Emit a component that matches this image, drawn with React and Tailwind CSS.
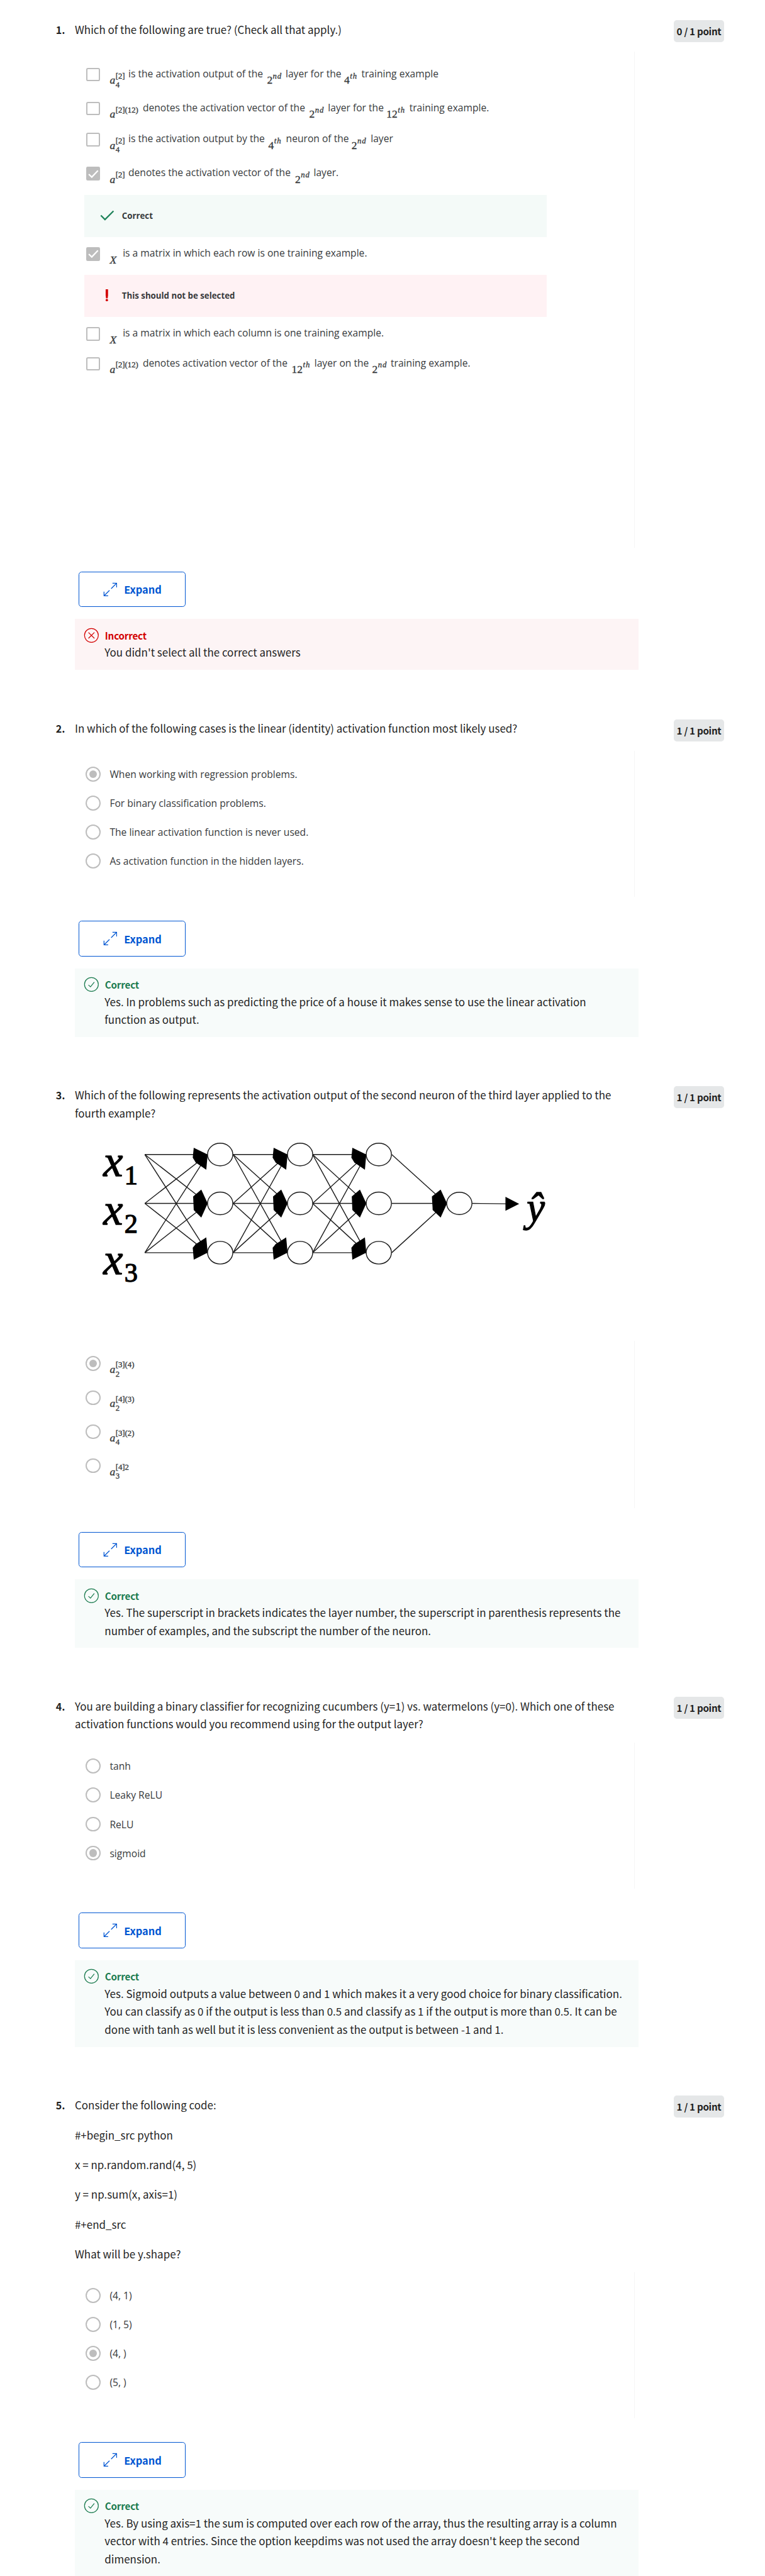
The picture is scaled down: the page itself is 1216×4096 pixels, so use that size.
import React from "react";

const SANS = "font-['Noto_Sans_CJK_SC','Noto_Sans',sans-serif]";
const UI = "font-['Open_Sans','Noto_Sans',sans-serif]";

/* A math term: base letter or number with a superscript and an optional subscript. */
function Term({ base, sup, sub, w, italicBase = true, italicSup = false }) {
  return (
    <span
      className="mt-[10px] flex shrink-0 items-start font-['Liberation_Serif',serif] [-webkit-text-stroke:0.35px_#373a3c]"
      style={{ width: w }}
    >
      <span className={`text-[18.5px] leading-[22px] ${italicBase ? "italic" : ""}`}>{base}</span>
      <span className="ml-[0.5px] mt-[-3px] flex flex-col items-start text-[13.5px] leading-[14px]">
        <span className={italicSup ? "italic tracking-[0.9px]" : ""}>{sup}</span>
        {sub && <span className="mt-px">{sub}</span>}
      </span>
    </span>
  );
}

const aSup = (sup, w, sub) => ({ base: "a", sup, sub, w });
const ord = (n, s, w) => ({ base: n, sup: s, w, italicBase: false, italicSup: true });

/* Segments of a statement: a string with its width, or a math term. */
function Statement({ parts }) {
  return (
    <span className={`flex items-start whitespace-nowrap leading-[22px] text-[#373a3c] ${UI}`}>
      {parts.map((p, i) =>
        p.text ? (
          <span key={i} className="-mt-px shrink-0 text-[16.5px]" style={{ width: p.w }}>{p.text}</span>
        ) : (
          <Term key={i} {...p} />
        )
      )}
    </span>
  );
}

function Checkbox({ checked }) {
  return checked ? (
    <span className="flex h-[22.5px] w-[22.5px] shrink-0 items-center justify-center rounded-[2.5px] bg-[#bdbdbd]">
      <svg viewBox="0 0 22 22" className="h-[22px] w-[22px]" fill="none" stroke="#fff" strokeWidth="2.4">
        <path d="M3.3 11.6 8.3 16.4 18.7 5.6" />
      </svg>
    </span>
  ) : (
    <span className="h-[22.5px] w-[22.5px] shrink-0 rounded-[3px] border-[2.5px] border-[#bdbdbd] bg-white" />
  );
}

function CheckRow({ checked, parts, h }) {
  return (
    <div className="flex items-start pl-[19.5px]" style={{ height: h }}>
      <Checkbox checked={checked} />
      <span className="ml-[16.5px]"><Statement parts={parts} /></span>
    </div>
  );
}

function Note({ good, children }) {
  return (
    <div className={`ml-4 flex h-[70px] w-[775px] items-center ${good ? "bg-[#f4faf8]" : "bg-[#fff2f4]"}`}>
      <span className="ml-[26px] flex w-[24px] justify-center">
        {good ? (
          <svg viewBox="0 0 24 20" className="mt-[-3px] h-5 w-6" fill="none" stroke="#1d8259" strokeWidth="2.4">
            <path d="M1.4 10 8.3 17 22.6 2.6" />
          </svg>
        ) : (
          <svg viewBox="0 0 6 22" className="mt-[-3px] h-[22px] w-1.5" fill="#d30001">
            <path d="M1 1h4v10l-.6 5H1.6L1 11z" />
            <circle cx="3" cy="19.2" r="2" />
          </svg>
        )}
      </span>
      <span className={`ml-[13px] mt-px text-[14px] font-bold text-[#373a3c] ${UI}`}>{children}</span>
    </div>
  );
}

function Radio({ checked }) {
  return (
    <span className="flex h-[25px] w-[25px] shrink-0 items-center justify-center rounded-full border-[2.5px] border-[#bdbdbd] bg-white">
      {checked && <span className="h-[13px] w-[13px] rounded-full bg-[#bdbdbd]" />}
    </span>
  );
}

function RadioRow({ checked, children, pitch = "h-[48.7px]" }) {
  return (
    <div className={`flex items-start pl-[18.5px] ${pitch}`}>
      <Radio checked={checked} />
      <span className={`ml-[15px] whitespace-nowrap text-[16.5px] leading-[26px] text-[#373a3c] ${UI}`}>{children}</span>
    </div>
  );
}

function RadioList({ options, selected }) {
  return options.map((o, i) => <RadioRow key={o} checked={i === selected}>{o}</RadioRow>);
}

function Badge({ children }) {
  return (
    <span className={`flex h-[37px] w-[85px] shrink-0 items-center justify-center whitespace-nowrap rounded-[5px] bg-[#e5e7e8] text-[16px] font-bold tracking-[-0.3px] text-[#1f1f1f] ${SANS}`}>
      {children}
    </span>
  );
}

function ExpandButton() {
  return (
    <button className={`ml-[6px] mt-[40px] flex h-[60px] w-[180px] items-center rounded-[5px] border border-[#0056d2] pl-[40px] text-[17.3px] font-bold text-[#0056d2] ${SANS}`}>
      <svg viewBox="0 0 24 24" className="h-6 w-6" fill="none" stroke="#0056d2" strokeWidth="1.3">
        <path d="M13.4 10.6 22.4 1.6M15.6 1.4H22.6V8.4M10.6 13.4 1.6 22.4M1.4 15.6V22.6H8.4" />
      </svg>
      <span className="ml-[11.5px] mt-px leading-none">Expand</span>
    </button>
  );
}

function Feedback({ good, lines, h }) {
  const color = good ? "#1d7c50" : "#d30001";
  return (
    <div className={`mt-5 w-[945px] ${good ? "bg-[#f7fbfa]" : "bg-[#fdf4f5]"} ${SANS} ${h}`}>
      <div className="flex h-[41px] items-end pb-px pl-[15px]">
        <svg viewBox="0 0 26 26" className="h-[26px] w-[26px]" fill="none" stroke={color} strokeWidth="1.3">
          <circle cx="13" cy="13" r="11.6" />
          <path d={good ? "M8 13.8 11.4 17 17.8 9" : "M8 8 18 18M18 8 8 18"} />
        </svg>
        <span className="ml-[9.5px] text-[16px] font-bold leading-[26px] tracking-[-0.2px]" style={{ color }}>
          {good ? "Correct" : "Incorrect"}
        </span>
      </div>
      <div className="pl-[50px] text-[17.9px] leading-[30px] text-[#1f1f1f]">
        {lines.map((l) => <p key={l} className="whitespace-nowrap">{l}</p>)}
      </div>
    </div>
  );
}

function Question({ number, title, points, figure, titleGap = "", head, body, height, feedback, children }) {
  return (
    <section className={height}>
      <div className={`flex items-start ${head}`}>
        <span className={`w-[32px] pt-px text-[17px] font-bold leading-[30px] text-[#1f1f1f] ${SANS}`}>{number}.</span>
        <div className={`w-[1004px] pt-px text-[17.9px] leading-[30px] text-[#1f1f1f] ${SANS} ${titleGap}`}>
          {title.map((t) => <p key={t} className="whitespace-nowrap">{t}</p>)}
          {figure}
        </div>
        <Badge>{points}</Badge>
      </div>
      <div className="pl-[32px]">
        <div className={`w-[939px] border-r border-[#f5f5f5] ${body}`}>{children}</div>
        <ExpandButton />
        <Feedback {...feedback} />
      </div>
    </section>
  );
}

/* Feed-forward network: three inputs, three hidden layers of three neurons, one output. */
function Network() {
  const rows = [167, 413, 661];
  const gaps = [[276, 592], [720, 994], [1120, 1390]];
  const lines = gaps.flatMap(([x1, x2]) => rows.flatMap((a) => rows.map((b) => [x1, a, x2, b])));
  return (
    <svg viewBox="0 0 2430 870" className="-mt-px ml-[25px] block h-[290px] w-[810px]" fill="none" stroke="#1a1a1a" strokeWidth="4.5">
      {lines.map((l) => <line key={l.join()} x1={l[0]} y1={l[1]} x2={l[2]} y2={l[3]} />)}
      {rows.map((y) => <line key={y} x1="1518" y1={y} x2="1790" y2="413" />)}
      <line x1="1922" y1="413" x2="2100" y2="415" />
      <g fill="#000" stroke="none">
        {[592, 994, 1390].map((x) => (
          <g key={x}>
            <path d={`M${x - 70} 133 ${x} 167 ${x - 7} 244 ${x - 60} 207 ${x - 75} 183z`} />
            <path d={`M${x - 32} 343 ${x} 413 ${x - 32} 484 ${x - 70} 446 ${x - 73} 378z`} />
            <path d={`M${x - 7} 584 ${x} 661 ${x - 70} 696 ${x - 75} 636 ${x - 60} 618z`} />
          </g>
        ))}
        <path d="M1764 343 1796 413 1764 484 1724 446 1720 378z" />
        <path d="M2090 380 2159 415 2090 450z" />
      </g>
      <g fill="#fff">
        {[655, 1057, 1453].map((x) =>
          rows.map((y) => <ellipse key={`${x}-${y}`} cx={x} cy={y} rx="63.5" ry="57" />)
        )}
        <ellipse cx="1858" cy="413" rx="63.5" ry="56" />
      </g>
      <g fill="#000" stroke="#000" strokeWidth="4" className="font-['Liberation_Serif',serif]">
        {[275, 520, 768].map((y, i) => (
          <React.Fragment key={y}>
            <text x="67" y={y} fontSize="222" fontStyle="italic">x</text>
            <text x="173" y={y + 40} fontSize="134">{i + 1}</text>
          </React.Fragment>
        ))}
        <text x="2197" y="502" fontSize="205" fontStyle="italic">ŷ</text>
      </g>
    </svg>
  );
}

const checks = [
  { h: 57, parts: [aSup("[2]", 31.2, "4"), { text: "is the activation output of the", w: 232.5 }, ord("2", "nd", 31.2), { text: "layer for the", w: 98.2 }, ord("4", "th", 28.9), { text: "training example", w: 130 }] },
  { h: 52, parts: [aSup("[2](12)", 55.4), { text: "denotes the activation vector of the", w: 279.2 }, ord("2", "nd", 31.3), { text: "layer for the", w: 98.2 }, ord("12", "th", 38.3), { text: "training example.", w: 134 }] },
  { h: 57, parts: [aSup("[2]", 31.2, "4"), { text: "is the activation output by the", w: 234.8 }, ord("4", "th", 29.6), { text: "neuron of the", w: 110 }, ord("2", "nd", 32), { text: "layer", w: 37 }] },
  { h: 47.5, checked: true, parts: [aSup("[2]", 31.2), { text: "denotes the activation vector of the", w: 279.5 }, ord("2", "nd", 31.2), { text: "layer.", w: 40 }] },
];
const matrixRow = [{ base: "X", w: 21.9 }, { text: "is a matrix in which each row is one training example.", w: 409 }];
const matrixColumn = [{ base: "X", w: 21.9 }, { text: "is a matrix in which each column is one training example.", w: 438 }];
const lastCheck = [aSup("[2](12)", 55.4), { text: "denotes activation vector of the", w: 249.6 }, ord("12", "th", 38.2), { text: "layer on the", w: 96.8 }, ord("2", "nd", 31.1), { text: "training example.", w: 134 }];

const terms = [["[3](4)", "2"], ["[4](3)", "2"], ["[3](2)", "4"], ["[4]2", "3"]];

export default function App() {
  return (
    <div className="h-[4096px] w-[1216px] overflow-hidden bg-white">
      <main className="flex h-[4321px] w-[1283px] flex-col overflow-hidden pl-[93.5px] pt-[33.4px] [zoom:0.948]">
        <Question
          number={1}
          title={["Which of the following are true? (Check all that apply.)"]}
          points="0 / 1 point"
          height="h-[1173px]"
          head="h-[53px]"
          body="h-[832px] pt-[27.5px]"
          feedback={{ good: false, h: "h-[85px]", lines: ["You didn't select all the correct answers"] }}
        >
          {checks.map((c, i) => <CheckRow key={i} {...c} />)}
          <Note good>Correct</Note>
          <div className="h-[17.5px]" />
          <CheckRow checked parts={matrixRow} h={46.5} />
          <Note>This should not be selected</Note>
          <div className="h-[17.5px]" />
          <CheckRow parts={matrixColumn} h={50} />
          <CheckRow parts={lastCheck} h={50} />
        </Question>

        <Question
          number={2}
          title={["In which of the following cases is the linear (identity) activation function most likely used?"]}
          points="1 / 1 point"
          height="h-[615px]"
          head="h-[53px]"
          body="h-[245px] pt-[26.5px]"
          feedback={{
            good: true,
            h: "h-[115px]",
            lines: ["Yes. In problems such as predicting the price of a house it makes sense to use the linear activation", "function as output."],
          }}
        >
          <RadioList
            selected={0}
            options={["When working with regression problems.", "For binary classification problems.", "The linear activation function is never used.", "As activation function in the hidden layers."]}
          />
        </Question>

        <Question
          number={3}
          title={["Which of the following represents the activation output of the second neuron of the third layer applied to the", "fourth example?"]}
          points="1 / 1 point"
          figure={<Network />}
          height="h-[1025px]"
          head="h-[428px]"
          body="h-[280px] pt-[25.5px]"
          feedback={{
            good: true,
            h: "h-[115px]",
            lines: ["Yes. The superscript in brackets indicates the layer number, the superscript in parenthesis represents the", "number of examples, and the subscript the number of the neuron."],
          }}
        >
          {terms.map(([sup, sub], i) => (
            <RadioRow key={sup} checked={i === 0} pitch="h-[57.1px]">
              <span className="flex pt-[1.5px]"><Term base="a" sup={sup} sub={sub} w={48} /></span>
            </RadioRow>
          ))}
        </Question>

        <Question
          number={4}
          title={["You are building a binary classifier for recognizing cucumbers (y=1) vs. watermelons (y=0). Which one of these", "activation functions would you recommend using for the output layer?"]}
          points="1 / 1 point"
          height="h-[669px]"
          head="h-[77px]"
          body="h-[245px] pt-[26.5px]"
          feedback={{
            good: true,
            h: "h-[145px]",
            lines: [
              "Yes. Sigmoid outputs a value between 0 and 1 which makes it a very good choice for binary classification.",
              "You can classify as 0 if the output is less than 0.5 and classify as 1 if the output is more than 0.5. It can be",
              "done with tanh as well but it is less convenient as the output is between -1 and 1.",
            ],
          }}
        >
          <RadioList selected={3} options={["tanh", "Leaky ReLU", "ReLU", "sigmoid"]} />
        </Question>

        <Question
          number={5}
          title={["Consider the following code:", "#+begin_src python", "x = np.random.rand(4, 5)", "y = np.sum(x, axis=1)", "#+end_src", "What will be y.shape?"]}
          titleGap="flex flex-col gap-5"
          points="1 / 1 point"
          height="h-[806px]"
          head="h-[296px]"
          body="h-[245px] pt-[26.5px]"
          feedback={{
            good: true,
            h: "h-[146px]",
            lines: [
              "Yes. By using axis=1 the sum is computed over each row of the array, thus the resulting array is a column",
              "vector with 4 entries. Since the option keepdims was not used the array doesn't keep the second",
              "dimension.",
            ],
          }}
        >
          <RadioList selected={2} options={["(4, 1)", "(1, 5)", "(4, )", "(5, )"]} />
        </Question>
      </main>
    </div>
  );
}
